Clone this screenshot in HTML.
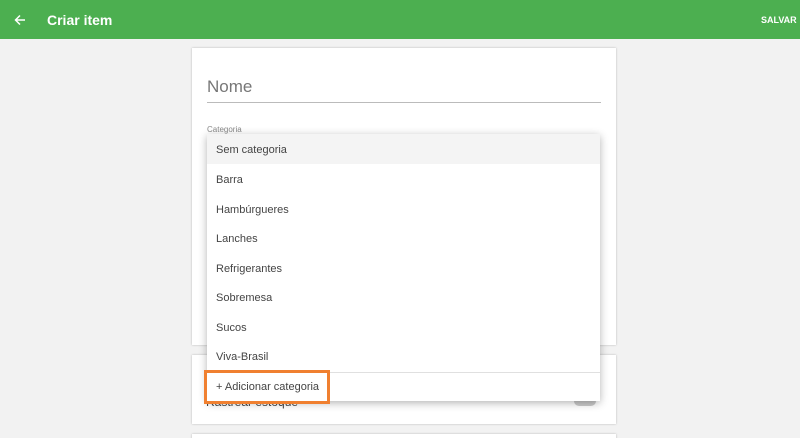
<!DOCTYPE html>
<html><head><style>
html,body{margin:0;width:800px;height:438px;overflow:hidden}
body{background:#f2f2f2;font-family:"Liberation Sans",sans-serif;position:relative}
.hdr{position:absolute;left:0;top:0;width:800px;height:39px;background:#4caf50;color:#fff}
.card{position:absolute;left:192px;width:424px;background:#fff;box-shadow:0 0 2px rgba(0,0,0,.25)}
.dd{position:absolute;left:207px;top:134px;width:393px;height:267px;background:#fff;box-shadow:0 2px 8px rgba(0,0,0,.3)}
.it{position:absolute;left:9px;font-size:11px;color:#444}
</style></head><body>
<div class="hdr">
<svg style="position:absolute;left:14px;top:14px" width="12" height="12" viewBox="0 0 12 12"><path d="M11 6H1.5M6 1.5L1.5 6L6 10.5" stroke="#fff" stroke-width="1.5" fill="none"/></svg>
<div style="position:absolute;left:47px;top:12px;font-size:14px;font-weight:bold">Criar item</div>
<div style="position:absolute;left:761px;top:15px;font-size:9px;font-weight:bold">SALVAR</div>
</div>
<div class="card" style="top:48px;height:297px">
<div style="position:absolute;left:15px;top:29px;font-size:17px;color:#777">Nome</div>
<div style="position:absolute;left:15px;top:54px;width:394px;height:1px;background:#bbb"></div>
<div style="position:absolute;left:15px;top:77px;font-size:8px;color:#888">Categoria</div>
</div>
<div class="card" style="top:355px;height:69px">
<div style="position:absolute;left:14px;top:40px;font-size:12px;color:#444">Rastrear estoque</div>
<div style="position:absolute;left:382px;top:41px;width:22px;height:10px;border-radius:5px;background:#ccc"></div>
</div>
<div class="card" style="top:434px;height:20px"></div>
<div class="dd">
<div style="position:absolute;left:0;top:0;width:393px;height:30px;background:#f4f4f4"></div>
<div class="it" style="top:10px">Sem categoria</div>
<div class="it" style="top:40px">Barra</div>
<div class="it" style="top:70px">Hambúrgueres</div>
<div class="it" style="top:99px">Lanches</div>
<div class="it" style="top:129px">Refrigerantes</div>
<div class="it" style="top:158px">Sobremesa</div>
<div class="it" style="top:188px">Sucos</div>
<div class="it" style="top:217px">Viva-Brasil</div>
<div style="position:absolute;left:0;top:238px;width:393px;height:1px;background:#e0e0e0"></div>
<div class="it" style="top:247px">+ Adicionar categoria</div>
</div>
<div style="position:absolute;left:204px;top:370px;width:120px;height:28px;border:3px solid #f08030"></div>
</body></html>
